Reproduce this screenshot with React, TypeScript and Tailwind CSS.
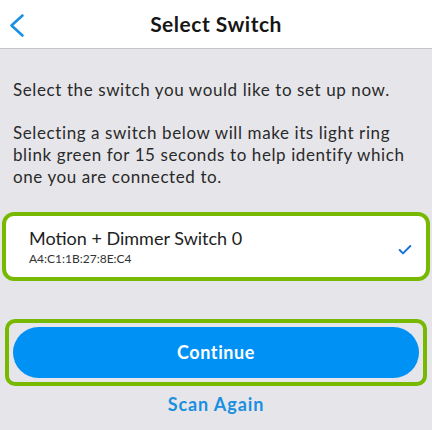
import { Check } from 'lucide-react';

export default function App() {
    return (
        <div
            className="w-[432px] h-[430px] bg-[#e6e6ea] overflow-hidden"
            style={{ fontFamily: 'Lato, "Open Sans", sans-serif' }}
        >
            {/* Header */}
            <div className="relative h-[49px] bg-white border-b border-[#c4c4c8] flex items-center justify-center">
                <svg className="absolute left-[8px] top-[13px]" width="18" height="26" viewBox="0 0 18 26" fill="none">
                    <polyline
                        points="14.5,2.5 3.5,12.5 14.5,22.5"
                        stroke="#1a8fe6"
                        strokeWidth="2.6"
                        strokeLinecap="round"
                        strokeLinejoin="round"
                    />
                </svg>
                <h1 className="text-[21px] font-bold text-[#161616] tracking-[0.5px]">Select Switch</h1>
            </div>

            {/* Intro */}
            <div className="px-[13px] pt-[30px] text-[17px] leading-[22px] text-[#2a2a2a] tracking-[0.6px]">
                <p>Select the switch you would like to set up now.</p>
                <p className="mt-[21px]">
                    Selecting a switch below will make its light ring blink green for 15 seconds to
                    help identify which one you are connected to.
                </p>
            </div>

            {/* Switch card */}
            <div className="mx-[2px] mt-[24px] h-[69px] rounded-[12px] border-4 border-[#76b900] bg-white flex items-center pl-[23px] pr-[13px]">
                <div className="flex-1">
                    <p className="text-[18px] leading-[22px] text-[#222]">Motion + Dimmer Switch 0</p>
                    <p className="text-[12px] leading-[16px] text-[#333] mt-[2px]">A4:C1:1B:27:8E:C4</p>
                </div>
                <Check className="text-[#1a73d9] mt-[6px]" size={16} strokeWidth={3} />
            </div>

            {/* Continue */}
            <div className="mx-[5px] mt-[38px] h-[67px] rounded-[10px] border-4 border-[#76b900] p-[4px]">
                <button className="w-full h-full rounded-full bg-[#0091f5] text-white text-[18px] font-bold tracking-[0.6px]">
                    Continue
                </button>
            </div>

            <div className="mt-[5px] text-center text-[18px] font-bold text-[#1a8fe0] tracking-[0.9px]">Scan Again</div>
        </div>
    );
}
